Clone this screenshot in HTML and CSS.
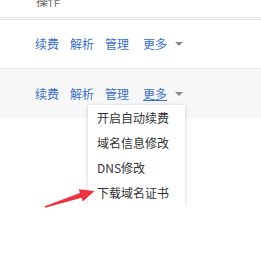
FILE: index.html
```html
<!DOCTYPE html>
<html lang="zh">
<head>
<meta charset="utf-8">
<link rel="stylesheet" href="styles.css">
</head>
<body>
<div class="table">
  <div class="head"><span class="head-label">操作</span></div>
  <div class="row">
    <div class="actions">
      <a class="link">续费</a>
      <a class="link">解析</a>
      <a class="link">管理</a>
      <a class="link more">更多<span class="caret"></span></a>
    </div>
  </div>
  <div class="row row-hover">
    <div class="actions">
      <a class="link">续费</a>
      <a class="link">解析</a>
      <a class="link">管理</a>
      <a class="link more active">更多<span class="caret"></span></a>
    </div>
  </div>
  <div class="dropdown">
    <ul class="menu">
      <li>开启自动续费</li>
      <li>域名信息修改</li>
      <li>DNS修改</li>
      <li>下载域名证书</li>
    </ul>
  </div>
</div>
<svg class="pointer" width="60" height="32" viewBox="0 0 60 32">
  <path d="M4.75 26.24 L39.9 12.9 L38.8 9.3 L54.5 11 L42.8 21.4 L41.5 17.7 L5.25 27.76 Z" fill="#ee3340"/>
</svg>
</body>
</html>
```
FILE: styles.css
```css
html, body {
  margin: 0;
  padding: 0;
  background: #fff;
  font-family: "Noto Sans CJK SC", "Liberation Sans", sans-serif;
  font-size: 12px;
}
.table {
  width: 261px;
}
.head {
  height: 17px;
  border-bottom: 1px solid #ececec;
  overflow: hidden;
}
.head-label {
  display: block;
  margin-top: -5px;
  padding-left: 36px;
  line-height: 12px;
  color: #666;
}
.row {
  height: 48px;
  border-top: 1px solid #e6e6e6;
  border-bottom: 1px solid #e6e6e6;
  margin-top: 1px;
  display: flex;
  align-items: center;
}
.row + .row {
  margin-top: 0;
  border-top: none;
  border-bottom: none;
  height: 49px;
}
.row-hover {
  background: #f7f7f7;
}
.actions {
  display: flex;
  align-items: center;
  gap: 11px;
  padding-left: 35px;
}
.link {
  color: #3a6fcb;
  line-height: 16px;
  cursor: pointer;
}
.more {
  display: flex;
  align-items: center;
  margin-left: 3px;
}
.active {
  text-decoration: underline;
}
.caret {
  display: inline-block;
  width: 0;
  height: 0;
  margin-left: 8px;
  border-left: 4px solid transparent;
  border-right: 4px solid transparent;
  border-top: 4px solid #888;
}
.dropdown {
  position: relative;
  z-index: 2;
  margin-top: -13px;
  padding-left: 88px;
}
.menu {
  width: 97px;
  margin: 0;
  padding: 0;
  list-style: none;
  background: #fff;
  box-shadow: 0 1px 4px rgba(0, 0, 0, 0.2);
}
.menu li {
  height: 25px;
  line-height: 25px;
  padding-left: 9px;
  color: #333;
  font-size: 12px;
}
.pointer {
  position: absolute;
  left: 40px;
  top: 180px;
  z-index: 3;
}
```
